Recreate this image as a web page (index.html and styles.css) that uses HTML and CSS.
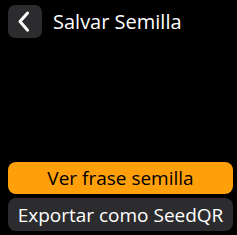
FILE: index.html
```html
<!DOCTYPE html>
<html>
<head>
<meta charset="utf-8">
<link rel="stylesheet" href="styles.css">
</head>
<body>
<div class="screen">
  <div class="topbar">
    <div class="back">
      <svg width="34" height="33" viewBox="0 0 34 33"><path d="M19.6 8 L12 16.6 L19.6 25.2" fill="none" stroke="#fff" stroke-width="3" stroke-linecap="round" stroke-linejoin="round"/></svg>
    </div>
    <div class="title">Salvar Semilla</div>
  </div>
  <div class="spacer"></div>
  <div class="buttons">
    <div class="btn primary">Ver frase semilla</div>
    <div class="btn secondary">Exportar como SeedQR</div>
  </div>
</div>
</body>
</html>
```
FILE: styles.css
```css
html, body {
  margin: 0;
  padding: 0;
  background: #000;
}
.screen {
  width: 237px;
  height: 235px;
  display: flex;
  flex-direction: column;
  font-family: "Open Sans", "Noto Sans", sans-serif;
  color: #fff;
  box-sizing: border-box;
  padding: 5px 4px 4px 8px;
}
.topbar {
  display: flex;
  align-items: center;
  height: 33px;
}
.back {
  width: 34px;
  height: 33px;
  border-radius: 7px;
  background: #2c2c2e;
  display: flex;
}
.title {
  margin-left: 11px;
  font-size: 20px;
  line-height: 32px;
}
.spacer {
  flex: 1;
}
.buttons {
  display: flex;
  flex-direction: column;
  gap: 4px;
}
.btn {
  height: 32px;
  border-radius: 8px;
  display: flex;
  align-items: center;
  justify-content: center;
  font-size: 19px;
}
.primary {
  background: #ff9f0a;
  color: #000;
}
.secondary {
  background: #2c2c2e;
  color: #fff;
  height: 33px;
}
```
